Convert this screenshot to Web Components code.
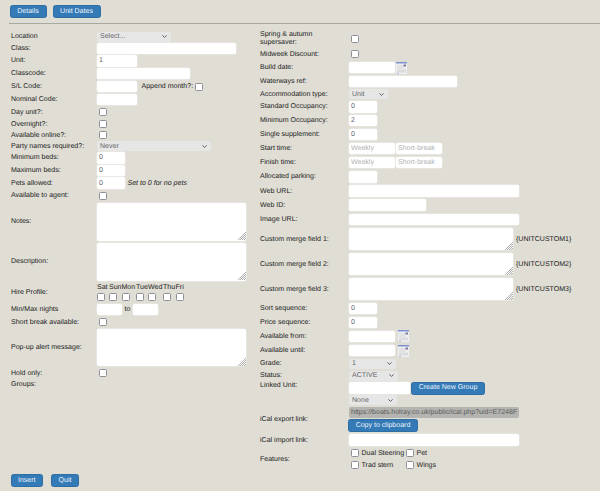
<!DOCTYPE html>
<html>
<head>
<meta charset="utf-8">
<title>Unit details</title>
<style>
  html, body { margin: 0; background: #dfddd4; }
  body { font: 7.04px "Liberation Sans", Arial, sans-serif; color: #222; text-rendering: geometricPrecision; }
  .inline { display: flex; align-items: center; }
  .note { font-style: italic; margin-left: 2.5px; }
  .stack { display: flex; flex-direction: column; align-items: flex-start; }
</style>
</head>
<body>
<unit-form>
  <ui-btn slot="tabs" w="37">Details</ui-btn>
  <ui-btn slot="tabs" w="48">Unit Dates</ui-btn>

  <div slot="left">
    <form-row h="11"><span slot="label">Location</span><f-select w="73.5" text="Select..."></f-select></form-row>
    <form-row h="12.5"><span slot="label">Class:</span><f-input w="139"></f-input></form-row>
    <form-row h="12.5"><span slot="label">Unit:</span><f-input w="40" value="1"></f-input></form-row>
    <form-row h="13"><span slot="label">Classcode:</span><f-input w="92.5"></f-input></form-row>
    <form-row h="13"><span slot="label">S/L Code:</span>
      <div class="inline"><f-input w="40"></f-input><span style="margin-left:4.5px">Append month?:</span><f-check style="margin-left:1.5px"></f-check></div>
    </form-row>
    <form-row h="13"><span slot="label">Nominal Code:</span><f-input w="40"></f-input></form-row>
    <form-row h="12"><span slot="label">Day unit?:</span><f-check inset></f-check></form-row>
    <form-row h="12"><span slot="label">Overnight?:</span><f-check inset></f-check></form-row>
    <form-row h="10.5"><span slot="label">Available online?:</span><f-check inset></f-check></form-row>
    <form-row h="11"><span slot="label">Party names required?:</span><f-select w="114" text="Never"></f-select></form-row>
    <form-row h="12.5"><span slot="label">Minimum beds:</span><f-input w="28" value="0"></f-input></form-row>
    <form-row h="12.5"><span slot="label">Maximum beds:</span><f-input w="28" value="0"></f-input></form-row>
    <form-row h="13"><span slot="label">Pets allowed:</span>
      <div class="inline"><f-input w="28" value="0"></f-input><span class="note">Set to 0 for no pets</span></div>
    </form-row>
    <form-row h="12.5"><span slot="label">Available to agent:</span><f-check inset></f-check></form-row>
    <form-row h="39.5"><span slot="label">Notes:</span><f-area w="149" h="37.5"></f-area></form-row>
    <form-row h="40.5"><span slot="label">Description:</span><f-area w="149" h="38"></f-area></form-row>
    <form-row h="21"><span slot="label">Hire Profile:</span><day-grid></day-grid></form-row>
    <form-row h="13"><span slot="label">Min/Max nights</span>
      <div class="inline"><f-input w="24.5"></f-input><span style="margin:0 3px 1px">to</span><f-input w="24.5"></f-input></div>
    </form-row>
    <form-row h="12"><span slot="label">Short break available:</span><f-check inset></f-check></form-row>
    <form-row h="39"><span slot="label">Pop-up alert message:</span><f-area w="149" h="37"></f-area></form-row>
    <form-row h="12"><span slot="label">Hold only:</span><f-check inset></f-check></form-row>
    <form-row h="10"><span slot="label">Groups:</span></form-row>
  </div>

  <div slot="right">
    <form-row wide h="16.5"><span slot="label" style="line-height:8px;display:block">Spring &amp; autumn<br>supersaver:</span><f-check inset></f-check></form-row>
    <form-row wide h="13"><span slot="label">Midweek Discount:</span><f-check inset></f-check></form-row>
    <form-row wide h="14"><span slot="label">Build date:</span><div class="inline"><f-input w="46"></f-input><cal-icon style="margin-left:1px"></cal-icon></div></form-row>
    <form-row wide h="13.5"><span slot="label">Waterways ref:</span><f-input w="108"></f-input></form-row>
    <form-row wide h="12"><span slot="label">Accommodation type:</span><f-select w="38.5" text="Unit"></f-select></form-row>
    <form-row wide h="13.5"><span slot="label">Standard Occupancy:</span><f-input w="27.5" value="0"></f-input></form-row>
    <form-row wide h="14"><span slot="label">Minimum Occupancy:</span><f-input w="27.5" value="2"></f-input></form-row>
    <form-row wide h="14"><span slot="label">Single supplement:</span><f-input w="27.5" value="0"></f-input></form-row>
    <form-row wide h="14"><span slot="label">Start time:</span><div class="inline"><f-input w="46" hint="Weekly"></f-input><f-input w="46" hint="Short-break" style="margin-left:1px"></f-input></div></form-row>
    <form-row wide h="14"><span slot="label">Finish time:</span><div class="inline"><f-input w="46" hint="Weekly"></f-input><f-input w="46" hint="Short-break" style="margin-left:1px"></f-input></div></form-row>
    <form-row wide h="14.5"><span slot="label">Allocated parking:</span><f-input w="27.5"></f-input></form-row>
    <form-row wide h="14"><span slot="label">Web URL:</span><f-input w="170"></f-input></form-row>
    <form-row wide h="14"><span slot="label">Web ID:</span><f-input w="77"></f-input></form-row>
    <form-row wide h="14.5"><span slot="label">Image URL:</span><f-input w="170"></f-input></form-row>
    <form-row wide h="25"><span slot="label">Custom merge field 1:</span><div class="inline"><f-area w="164" h="22.5"></f-area><span style="margin-left:3px">{UNITCUSTOM1}</span></div></form-row>
    <form-row wide h="25"><span slot="label">Custom merge field 2:</span><div class="inline"><f-area w="164" h="22.5"></f-area><span style="margin-left:3px">{UNITCUSTOM2}</span></div></form-row>
    <form-row wide h="25"><span slot="label">Custom merge field 3:</span><div class="inline"><f-area w="164" h="22.5"></f-area><span style="margin-left:3px">{UNITCUSTOM3}</span></div></form-row>
    <form-row wide h="14"><span slot="label">Sort sequence:</span><f-input w="27.5" value="0"></f-input></form-row>
    <form-row wide h="13.5"><span slot="label">Price sequence:</span><f-input w="27.5" value="0"></f-input></form-row>
    <form-row wide h="14.5"><span slot="label">Available from:</span><div class="inline"><f-input w="46"></f-input><cal-icon style="margin-left:3px"></cal-icon></div></form-row>
    <form-row wide h="14"><span slot="label">Available until:</span><div class="inline"><f-input w="46"></f-input><cal-icon style="margin-left:3px"></cal-icon></div></form-row>
    <form-row wide h="12"><span slot="label">Grade:</span><f-select w="47" text="1"></f-select></form-row>
    <form-row wide h="12"><span slot="label">Status:</span><f-select w="48.5" text="ACTIVE"></f-select></form-row>
    <form-row wide top h="24.5"><span slot="label">Linked Unit:</span>
      <div class="stack">
        <div class="inline"><f-input w="61"></f-input><ui-btn w="74" style="margin-left:1px">Create New Group</ui-btn></div>
        <f-select w="47.5" text="None" style="margin-top:.5px"></f-select>
      </div>
    </form-row>
    <form-row wide h="27"><span slot="label">iCal export link:</span>
      <div class="stack">
        <f-input w="170" value="https://boats.holray.co.uk/public/ical.php?uid=E7248F68" off></f-input>
        <ui-btn w="70" style="margin:1px 0 0 -1px">Copy to clipboard</ui-btn>
      </div>
    </form-row>
    <form-row wide h="14"><span slot="label">iCal import link:</span><f-input w="170"></f-input></form-row>
    <form-row wide h="24"><span slot="label">Features:</span>
      <div class="feat">
        <div class="inline" style="height:12px"><f-check inset></f-check><span style="margin-left:2.5px;width:44.5px;white-space:nowrap">Dual Steering</span><f-check></f-check><span style="margin-left:2.5px">Pet</span></div>
        <div class="inline" style="height:12px"><f-check inset></f-check><span style="margin-left:2.5px;width:44.5px;white-space:nowrap">Trad stern</span><f-check></f-check><span style="margin-left:2.5px">Wings</span></div>
      </div>
    </form-row>
  </div>

  <ui-btn slot="actions" w="32.5">Insert</ui-btn>
  <ui-btn slot="actions" w="28">Quit</ui-btn>
</unit-form>

<script>
// small helper, all elements are built the same way
function define(name, css, html, setup) {
  customElements.define(name, class extends HTMLElement {
    connectedCallback() {
      if (this.shadowRoot) return;
      this.attachShadow({ mode: 'open' });
      this.shadowRoot.innerHTML = `<style>${css}</style>${typeof html === 'function' ? html(this) : html}`;
      if (setup) setup(this);
    }
  });
}

const FONT = '7.04px "Liberation Sans", Arial, sans-serif';

define('unit-form', `
  :host { display: block; width: 600px; height: 491px; overflow: hidden; box-sizing: border-box; }
  .tabs { display: flex; gap: 6px; padding: 5px 0 0 9.5px; height: 14px; }
  .rule { height: 1.5px; background: #a9a9a1; margin: 3.5px 0 7px 9px; }
  .cols { display: flex; height: 440px; padding-left: 11px; }
  .left { width: 249px; }
  .actions { display: flex; gap: 8px; padding: 3px 0 0 10.5px; }
`, `
  <div class="tabs"><slot name="tabs"></slot></div>
  <div class="rule"></div>
  <div class="cols">
    <div class="left"><slot name="left"></slot></div>
    <div class="right"><slot name="right"></slot></div>
  </div>
  <div class="actions"><slot name="actions"></slot></div>
`);

define('form-row', `
  :host { display: grid; grid-template-columns: 86px auto; align-items: center; justify-content: start; }
  :host([wide]) { grid-template-columns: 89px auto; }
  :host([top]) { align-items: start; }
  ::slotted([slot="label"]) { white-space: nowrap; }
`, `<slot name="label"></slot><slot></slot>`, el => {
  el.style.height = el.getAttribute('h') + 'px';
});

define('ui-btn', `
  :host { display: inline-flex; }
  button {
    font: ${FONT}; color: #eef4fa; text-rendering: geometricPrecision;
    background: #337ab7; border: 1px solid #2e6da4; border-radius: 2.5px;
    height: 13px; padding: 0; width: 100%; line-height: 1; white-space: nowrap;
  }
`, el => `<button type="button"><slot></slot></button>`, el => {
  el.style.width = el.getAttribute('w') + 'px';
});

define('f-input', `
  :host { display: inline-flex; }
  input {
    box-sizing: border-box; width: 100%; height: 11.5px; margin: 0; padding: 0 2px;
    font: ${FONT}; color: #666; text-rendering: geometricPrecision;
    background: #fff; border: 0; border-radius: 2px; outline: 0;
    box-shadow: 0 0 0 .5px #eeeeea;
  }
  input::placeholder { color: #b0b0b0; opacity: 1; }
  input:disabled { background: #b4b4b0; color: #5c5c5c; box-shadow: none; }
`, el => `<input type="text">`, el => {
  const i = el.shadowRoot.querySelector('input');
  el.style.width = el.getAttribute('w') + 'px';
  if (el.hasAttribute('value')) i.value = el.getAttribute('value');
  if (el.hasAttribute('hint')) i.placeholder = el.getAttribute('hint');
  if (el.hasAttribute('off')) i.disabled = true;
});

define('f-select', `
  :host { display: inline-block; position: relative; height: 10px; }
  select {
    appearance: none; box-sizing: border-box; display: block; width: 100%; height: 10px; margin: 0;
    padding: 0 0 0 3px; border: 0; border-radius: 2px; outline: 0;
    background: #e6e6e6; color: #666; font: ${FONT}; text-rendering: geometricPrecision;
  }
  svg { position: absolute; right: 4px; top: 3.5px; }
`, el => `<select><option>${el.getAttribute('text')}</option></select>
  <svg width="5" height="3" viewBox="0 0 5 3"><path d="M.4.4 2.5 2.4 4.6.4" fill="none" stroke="#555" stroke-width=".9"/></svg>`,
el => { el.style.width = el.getAttribute('w') + 'px'; });

define('f-check', `
  :host { display: inline-flex; flex: none; }
  :host([inset]) { margin-left: 2px; }
  input {
    appearance: none; box-sizing: border-box; width: 8px; height: 8px; margin: 0;
    background: #fff; border: 1px solid #8f8f99; border-radius: 1.5px;
  }
`, `<input type="checkbox">`);

define('f-area', `
  :host { display: inline-block; position: relative; }
  textarea {
    display: block; box-sizing: border-box; width: 100%; height: 100%; margin: 0; padding: 2px;
    border: 0; border-radius: 2px; outline: 0; resize: none; background: #fff;
    box-shadow: 0 0 0 .5px #eeeeea;
  }
  svg { position: absolute; right: .5px; bottom: .5px; }
`, `<textarea></textarea>
  <svg width="8" height="8" viewBox="0 0 8 8"><path d="M0 8 8 0M2 8 8 2M4 8 8 4M6 8 8 6" stroke="#777" stroke-width=".6"/></svg>`,
el => {
  el.style.width = el.getAttribute('w') + 'px';
  el.style.height = el.getAttribute('h') + 'px';
});

define('cal-icon', `
  :host { display: inline-flex; flex: none; }
`, `<svg width="11" height="12" viewBox="0 0 11 12">
  <rect width="11" height="12" fill="#eef0f4"/>
  <rect width="11" height="1.5" fill="#7f8fd2"/>
  <rect x="1" y="3" width="6.5" height="4" fill="#e2e2e2"/>
  <rect x="7.5" y="2.5" width="2.5" height="2" fill="#74798f"/>
  <rect x="1" y="7.5" width="9" height="3" fill="#dcdcdc"/>
  <rect x="1" y="10.8" width="2" height="1" fill="#a9b2de"/>
</svg>`);

define('day-grid', `
  :host { display: inline-grid; grid-template-columns: 12px 12.5px 14.5px 12px 15px 12.5px 9px; justify-items: start; row-gap: 1px; margin-top: -2px; }
  span { white-space: nowrap; line-height: 9px; }
`, ['Sat','Sun','Mon','Tue','Wed','Thu','Fri'].map(d => `<span>${d}</span>`).join('')
  + '<f-check></f-check>'.repeat(7));
</script>
</body>
</html>
